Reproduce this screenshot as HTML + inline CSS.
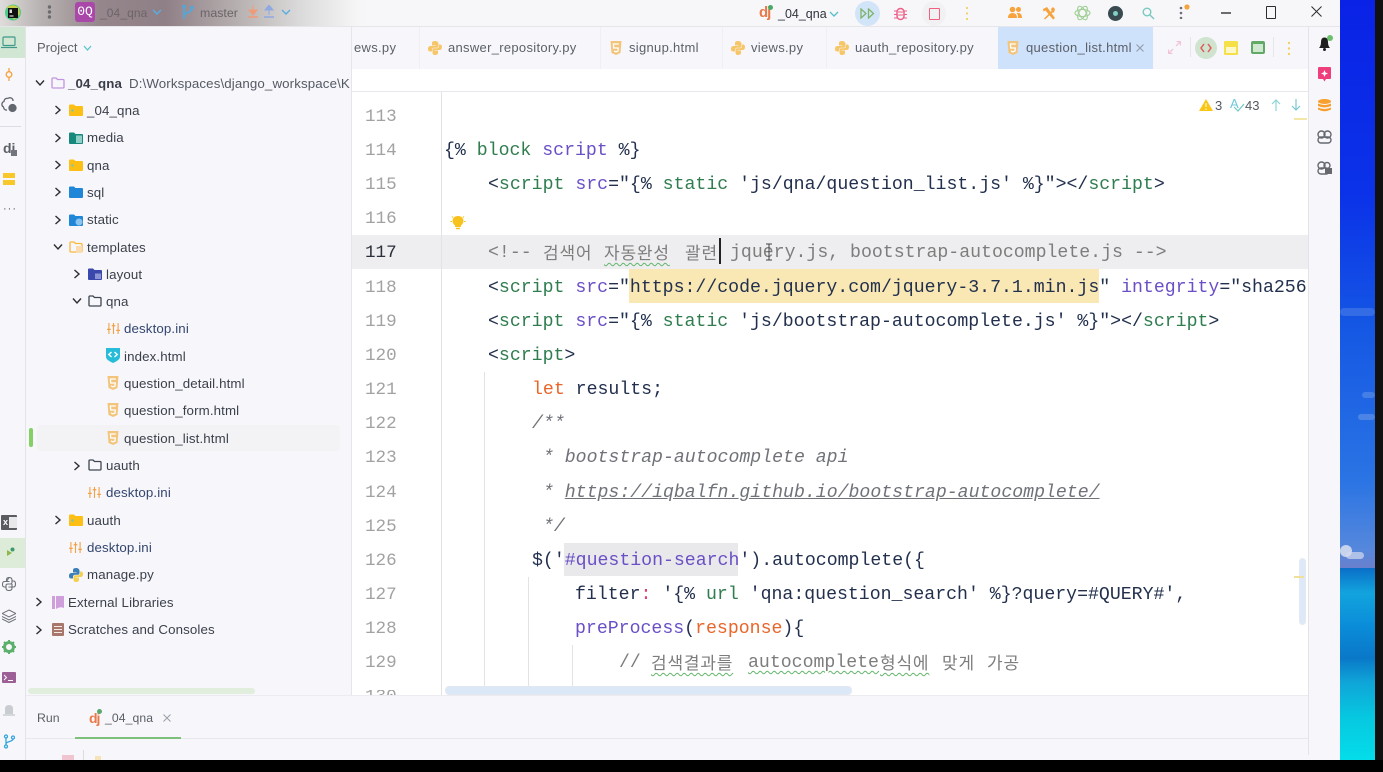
<!DOCTYPE html>
<html><head><meta charset="utf-8"><title>PyCharm</title>
<style>
html,body{margin:0;padding:0;background:#000}
#r{position:relative;width:1383px;height:772px;overflow:hidden;background:#f7f7fb;font-family:"Liberation Sans","Noto Sans CJK KR",sans-serif}
#r div,#r span.a,#r svg.a{position:absolute}
.t{font-size:13.3px;line-height:20px;height:20px;color:#3a3f4a;white-space:nowrap;position:absolute;letter-spacing:.12px;margin-top:1px}
.f{color:#33456f}
.n{position:absolute;left:365px;width:32px;font:17.6px/34px "Liberation Mono",monospace;color:#a2a2a2;height:34px;margin-top:1px}
.c{position:absolute;font:18.2px/34px "Liberation Mono","Noto Sans CJK KR",monospace;color:#22304e;white-space:pre;height:34px;margin-top:1px}
.k{position:absolute;font:17px/34px "Noto Sans CJK KR",sans-serif;letter-spacing:.8px;color:#7d7d7d;white-space:pre;height:34px}
.g{color:#2f7d4f}.p{color:#6a4fc6}.y{color:#7d7d7d}.o{color:#e8662a}.i{font-style:italic;color:#6f7278}
.w{text-decoration:underline wavy #62b56a 1px;text-underline-offset:3px}
.tb{position:absolute;top:39px;font-size:13px;line-height:18px;color:#5b6069;white-space:nowrap;letter-spacing:.3px}
.sep{position:absolute;top:27px;width:1px;height:42px;background:#f0f0f4}
</style></head><body><div id="r">
<svg width="0" height="0" style="position:absolute"><defs>
<symbol id="fy" viewBox="0 0 14 12"><path d="M0 1.500Q0 .5 1 .5H5L6.500 2H13Q14 2 14 3V11Q14 12 13 12H1Q0 12 0 11Z" fill="#fdbf14"/><circle cx="3.500" cy="6.500" r="1.200" fill="#7fc4b0"/></symbol>
<symbol id="h5" viewBox="0 0 12 14"><path d="M.5 0H11.500L10.500 12L6 14L1.500 12Z" fill="#f3c57c"/><path d="M8.800 3H3.400L3.700 7H8.300L8 10L6 10.800L4 10" fill="none" stroke="#fff" stroke-width="1.300"/></symbol>
<symbol id="py" viewBox="0 0 14 14"><path d="M7 0C4 0 4 1.500 4 3V4.500H7.500V5H2.500C1 5 0 6 0 8C0 10 1 10.500 2.500 10.500H4V8.500C4 7.500 5 6.700 6 6.700H9C10 6.700 10.500 6 10.500 5V3C10.500 1 9 0 7 0Z" fill="#f7c668"/><path d="M7 14C10 14 10 12.500 10 11V9.500H6.500V9H11.500C13 9 14 8 14 6C14 4 13 3.500 11.500 3.500H11V5.500C11 6.500 10 7.300 9 7.300H6C5 7.300 4.500 8 4.500 9V11C4.500 13 5 14 7 14Z" fill="#f7c668"/></symbol>
<symbol id="py2" viewBox="0 0 14 14"><path d="M7 0C4 0 4 1.500 4 3V4.500H7.500V5H2.500C1 5 0 6 0 8C0 10 1 10.500 2.500 10.500H4V8.500C4 7.500 5 6.700 6 6.700H9C10 6.700 10.500 6 10.500 5V3C10.500 1 9 0 7 0Z" fill="#3b7fb8"/><path d="M7 14C10 14 10 12.500 10 11V9.500H6.500V9H11.500C13 9 14 8 14 6C14 4 13 3.500 11.500 3.500H11V5.500C11 6.500 10 7.300 9 7.300H6C5 7.300 4.500 8 4.500 9V11C4.500 13 5 14 7 14Z" fill="#f5d04f"/></symbol>
<symbol id="ini" viewBox="0 0 14 12"><path d="M2 0V12M7 0V12M12 0V12" stroke="#f2a044" stroke-width="1.200" fill="none"/><path d="M0 7H4M5 3H9M10 8H14" stroke="#f2a044" stroke-width="1.400" fill="none"/></symbol>
<symbol id="ch" viewBox="0 0 8 10"><path d="M1.500 1L6 5L1.500 9" fill="none" stroke="#2e2e2e" stroke-width="1.400"/></symbol>
<symbol id="cd" viewBox="0 0 10 8"><path d="M1 1.500L5 6L9 1.500" fill="none" stroke="#2e2e2e" stroke-width="1.400"/></symbol>
<symbol id="fo" viewBox="0 0 14 12"><path d="M1 2Q1 1 2 1H5L6.500 2.500H12Q13 2.500 13 3.500V10Q13 11 12 11H2Q1 11 1 10Z" fill="none" stroke="#3f4550" stroke-width="1.300"/></symbol>
</defs></svg>

<!-- title bar -->
<div style="left:0;top:0;width:1340px;height:26px;background:#f7f7fa"></div>
<div style="left:0;top:0;width:370px;height:26px;background:linear-gradient(90deg,#dfdddb 0,#b8b3b2 40px,#95868c 100px,#8f7f86 165px,#b4adad 233px,#dbdada 300px,#f5f5f6 355px,#f7f7fa 370px)"></div>
<div style="left:0;top:26px;width:1340px;height:1px;background:#e6e6ea"></div>
<svg class="a" style="left:5px;top:4px" width="16" height="17" viewBox="0 0 16 17"><circle cx="8" cy="8.500" r="8" fill="#4fc98a"/><path d="M2 3Q8 -1 14 4L15 10L9 16Z" fill="#e9d23c" opacity=".8"/><rect x="3" y="4" width="10" height="10" fill="#111"/><rect x="4.500" y="11.500" width="4" height="1" fill="#fff"/><rect x="4.500" y="5.500" width="2.500" height="3.500" fill="#ddd"/></svg>
<svg class="a" style="left:47px;top:5px" width="5" height="14"><circle cx="2.500" cy="2" r="1.700" fill="#6b6b70"/><circle cx="2.500" cy="7" r="1.700" fill="#6b6b70"/><circle cx="2.500" cy="12" r="1.700" fill="#6b6b70"/></svg>
<div style="left:75px;top:2px;width:20px;height:20px;background:#a948a8;border-radius:3px;color:#fff;font:13px/20px 'Liberation Mono',monospace;text-align:center">0Q</div>
<div style="left:100px;top:3px;font-size:12px;line-height:20px;color:#6d6468;letter-spacing:.1px">_04_qna</div>
<svg class="a" style="left:152px;top:9px" width="10" height="7"><path d="M1 1L5 5L9 1" fill="none" stroke="#58aee0" stroke-width="1.400"/></svg>
<svg class="a" style="left:181px;top:4px" width="14" height="17" viewBox="0 0 14 17"><path d="M3 2V15M3 12C3 8 11 9 11 4" fill="none" stroke="#4fa8dc" stroke-width="1.800"/><circle cx="3" cy="2.500" r="1.800" fill="#4fa8dc"/><circle cx="11" cy="3.500" r="1.800" fill="#4fa8dc"/></svg>
<div style="left:200px;top:3px;font-size:12.4px;line-height:20px;color:#6b6468">master</div>
<svg class="a" style="left:247px;top:5px" width="12" height="13"><path d="M6 0V6M2 5H10L6 10Z" fill="#ef9a78" stroke="#ef9a78"/><path d="M1 12H11" stroke="#ef9a78" stroke-width="1.500"/></svg>
<svg class="a" style="left:263px;top:5px" width="12" height="13"><path d="M6 10V4M2 5H10L6 0Z" fill="#8fa9e2" stroke="#8fa9e2"/><path d="M1 12H11" stroke="#8fa9e2" stroke-width="1.500"/></svg>
<svg class="a" style="left:281px;top:9px" width="10" height="7"><path d="M1 1L5 5L9 1" fill="none" stroke="#58aee0" stroke-width="1.400"/></svg>

<div style="left:759px;top:3px;font:bold 15px/20px 'Liberation Sans',sans-serif;color:#e8794a;letter-spacing:-1px">dj</div>
<div style="left:768px;top:5px;width:5px;height:5px;border-radius:50%;background:#4aa86a"></div>
<div style="left:778px;top:4px;font-size:12.5px;line-height:20px;color:#30343c">_04_qna</div>
<svg class="a" style="left:829px;top:11px" width="10" height="7"><path d="M1 1L5 5L9 1" fill="none" stroke="#5cc0cc" stroke-width="1.400"/></svg>
<div style="left:855px;top:1px;width:25px;height:25px;border-radius:50%;background:#d2e4f8"></div>
<svg class="a" style="left:860px;top:8px" width="15" height="11"><path d="M1 1L6 5.500L1 10ZM8.500 1L13.500 5.500L8.500 10Z" fill="none" stroke="#7cb46c" stroke-width="1.300"/></svg>
<svg class="a" style="left:894px;top:6px" width="13" height="15" viewBox="0 0 13 15"><rect x="3" y="2.500" width="7" height="11" rx="3.500" fill="none" stroke="#ee5f86" stroke-width="1.500"/><path d="M0 5H3M10 5H13M0 8.500H3M10 8.500H13M0 12H3M10 12H13M4 6H9M4 9H9" stroke="#ee5f86" stroke-width="1"/></svg>
<div style="left:922px;top:1px;width:24px;height:25px;border-radius:50%;background:#f1f1f3"></div>
<div style="left:929px;top:8px;width:9px;height:10px;border:1.500px solid #f0607f;border-radius:1px"></div>
<svg class="a" style="left:965px;top:6px" width="4" height="15"><circle cx="2" cy="2" r="1.100" fill="#eed264"/><circle cx="2" cy="7.500" r="1.100" fill="#eed264"/><circle cx="2" cy="13" r="1.100" fill="#eed264"/></svg>
<svg class="a" style="left:1008px;top:6px" width="14" height="13"><circle cx="4.500" cy="3.500" r="2.800" fill="#f7a43c"/><circle cx="10.500" cy="3.500" r="2.500" fill="#f7a43c"/><path d="M0 12Q0 7 4.500 7Q9 7 9 12ZM10 12Q10 8 8.500 7Q14 6 14 12Z" fill="#f7a43c"/></svg>
<svg class="a" style="left:1042px;top:6px" width="14" height="14"><path d="M1 3L5 1L13 12L11 13.500L3.500 4.500L1.500 5.500Z" fill="#f5a33c"/><path d="M13 3L11 1L9 3L9.500 5L2 12.500L3 13.500L10.500 6.500L12 6.500Z" fill="#f5a33c"/></svg>
<svg class="a" style="left:1074px;top:4px" width="17" height="18" fill="none" stroke="#9fcf94" stroke-width="1.100"><ellipse cx="8.500" cy="9" rx="7.500" ry="3.500"/><ellipse cx="8.500" cy="9" rx="7.500" ry="3.500" transform="rotate(60 8.500 9)"/><ellipse cx="8.500" cy="9" rx="7.500" ry="3.500" transform="rotate(120 8.500 9)"/></svg>
<div style="left:1108px;top:6px;width:15px;height:15px;border-radius:50%;background:#394a50"></div>
<div style="left:1113px;top:11px;width:5px;height:5px;border-radius:50%;background:#7ed0c8"></div>
<svg class="a" style="left:1142px;top:7px" width="13" height="13" fill="none" stroke="#78c8c0" stroke-width="1.400"><circle cx="5" cy="5" r="3.800"/><path d="M8 8L12 12"/></svg>
<svg class="a" style="left:1179px;top:4px" width="12" height="15"><circle cx="2" cy="4" r="1.300" fill="#6a6f78"/><circle cx="2" cy="9" r="1.300" fill="#6a6f78"/><circle cx="2" cy="14" r="1.300" fill="#6a6f78"/><circle cx="8" cy="3" r="2.600" fill="#f5a33c"/></svg>
<div style="left:1221px;top:12px;width:10px;height:1.500px;background:#6c6c70"></div>
<div style="left:1266px;top:6px;width:8px;height:11px;border:1.300px solid #2c2c2c;border-radius:1px"></div>
<svg class="a" style="left:1311px;top:6px" width="11" height="11"><path d="M.5.5L10.500 10.500M10.500.5L.5 10.500" stroke="#2c2c2c" stroke-width="1"/></svg>

<!-- wallpaper -->
<div style="left:1340px;top:0;width:35px;height:568px;background:linear-gradient(180deg,#0a22e6 0,#0b33e8 200px,#1558e4 330px,#2a74e4 480px,#5688dc 550px,#6a80cc 568px)"></div>
<div style="left:1340px;top:568px;width:35px;height:192px;background:linear-gradient(180deg,#0a6fc8 0,#12a4de 25px,#0a8bd8 60px,#0a78c8 90px,#0fa6d8 115px,#06c8e0 150px,#04ddea 192px)"></div>
<div style="left:1340px;top:308px;width:35px;height:8px;background:#6f9ae8;opacity:.35;border-radius:4px"></div>
<div style="left:1362px;top:392px;width:13px;height:6px;background:#7ea4ea;opacity:.4;border-radius:3px"></div>
<div style="left:1358px;top:414px;width:17px;height:6px;background:#8cace8;opacity:.4;border-radius:3px"></div>
<div style="left:1340px;top:545px;width:12px;height:12px;background:#e4e6f0;opacity:.8;border-radius:6px"></div>
<div style="left:1346px;top:552px;width:18px;height:7px;background:#d4daf0;opacity:.7;border-radius:4px"></div>
<div style="left:1375px;top:0;width:8px;height:760px;background:#111"></div>
<div style="left:0;top:760px;width:1383px;height:12px;background:#000"></div>

<!-- left bar -->
<div style="left:25px;top:27px;width:1px;height:733px;background:#e4e4e8"></div>
<div style="left:0;top:27px;width:25px;height:31px;background:#d2e6d4"></div>
<svg class="a" style="left:1px;top:36px" width="16" height="13" fill="none" stroke="#3f9a8a" stroke-width="1.200"><rect x="2" y="1" width="12" height="8.500" rx="1"/><path d="M0 11.500H16"/></svg>
<svg class="a" style="left:4px;top:68px" width="10" height="13" fill="none" stroke="#f5a33c" stroke-width="1.300"><circle cx="5" cy="6.500" r="2.800"/><path d="M5 0V3.500M5 9.500V13"/></svg>
<svg class="a" style="left:1px;top:97px" width="16" height="16" fill="none" stroke="#62666e" stroke-width="1.300"><path d="M7 1.500A3 3 0 0 0 3 4.500A3 3 0 0 0 2.500 10A3 3 0 0 0 6 13M7 1.500A3 3 0 0 1 12 4"/><circle cx="11.500" cy="11" r="3.500" fill="#62666e"/></svg>
<div style="left:0;top:126px;width:21px;height:1px;background:#dcdce4"></div>
<div style="left:3px;top:140px;font:bold 14px/16px 'Liberation Sans',sans-serif;color:#5d6068">di</div>
<div style="left:11px;top:150px;width:6px;height:6px;background:#72757c"></div>
<div style="left:3px;top:173px;width:12px;height:5px;background:#f8c82a"></div>
<div style="left:3px;top:180px;width:12px;height:5px;background:#f8c82a"></div>
<div style="left:3px;top:203px;font-size:11px;line-height:12px;color:#555;letter-spacing:1px">···</div>
<div style="left:1px;top:515px;width:16px;height:15px;background:#5a5c60;border-radius:1px"></div>
<div style="left:9px;top:517px;width:8px;height:11px;background:#e8e8ea"></div>
<div style="left:3px;top:516px;font:bold 9px/13px 'Liberation Sans',sans-serif;color:#fff">x</div>
<div style="left:0;top:538px;width:25px;height:30px;background:#dcecd8"></div>
<svg class="a" style="left:6px;top:547px" width="9" height="10"><path d="M1 3L6 6L1 9Z" fill="#8fb84a"/><circle cx="6.500" cy="2.500" r="2" fill="#3f9a6a"/></svg>
<svg class="a" style="left:2px;top:577px" width="14" height="14" viewBox="0 0 14 14" fill="none" stroke="#6c7078" stroke-width="1.100"><path d="M7 .5C4.500 .5 4.500 2 4.500 3V4.500H7.500M4.500 4.500H2.500C1 4.500 .5 6 .5 7.500C.5 9 1 10 2.500 10H4V8.500C4 7.500 5 7 6 7H8.500C9.500 7 10 6 10 5V3C10 1.500 9 .5 7 .5Z"/><path d="M10 4H11.500C13 4 13.500 5.500 13.500 7C13.500 8.500 13 10 11.500 10H6.500M10 7V11C10 12.500 9 13.500 7 13.500C5 13.500 4 12.500 4 11V10"/></svg>
<svg class="a" style="left:2px;top:609px" width="14" height="14" fill="none" stroke="#6c7078" stroke-width="1"><path d="M7 1L14 4.500L7 8L0 4.500ZM0 7.500L7 11L14 7.500M0 10L7 13.500L14 10"/></svg>
<svg class="a" style="left:2px;top:640px" width="14" height="14" viewBox="0 0 14 14"><circle cx="7" cy="7" r="4.500" fill="none" stroke="#5cb06c" stroke-width="3"/><path d="M7 0V3M7 11V14M0 7H3M11 7H14M2 2L4 4M10 10L12 12M12 2L10 4M4 10L2 12" stroke="#5cb06c" stroke-width="2"/></svg>
<div style="left:2px;top:672px;width:14px;height:11px;background:#9c5f96;border-radius:1px"></div>
<svg class="a" style="left:3px;top:674px" width="12" height="8"><path d="M1 1L3.500 3.500L1 6M5 6.500H10" stroke="#fff" fill="none"/></svg>
<svg class="a" style="left:2px;top:702px" width="14" height="15"><path d="M3 12V7Q3 3 7 3Q11 3 11 7V12Z" fill="#c9ccd0"/><path d="M1 13H13" stroke="#c9ccd0" stroke-width="1.500"/></svg>
<svg class="a" style="left:3px;top:734px" width="12" height="15" fill="none" stroke="#35a4dc" stroke-width="1.300"><circle cx="3" cy="2.500" r="1.500"/><circle cx="3" cy="12.500" r="1.500"/><circle cx="10" cy="3.500" r="1.500"/><path d="M3 4V11M3 10C3 7 10 8 10 5"/></svg>

<!-- project header -->
<div style="left:37px;top:38px;font-size:13px;line-height:20px;color:#5e6268">Project</div>
<svg class="a" style="left:83px;top:45px" width="9" height="7"><path d="M1 1L4.500 5L8 1" fill="none" stroke="#5cc4cc" stroke-width="1.300"/></svg>

<!-- project tree -->
<div style="left:37px;top:425px;width:303px;height:26px;background:#f3f3f6;border-radius:3px"></div>
<div style="left:29px;top:428px;width:4px;height:19px;background:#86cf65;border-radius:2px"></div>

<svg class="a" style="left:35px;top:79px" width="10" height="8"><use href="#cd"/></svg>
<svg class="a" style="left:51px;top:77px" width="14" height="12" fill="none" stroke="#c295e0" stroke-width="1.300"><path d="M1 2Q1 1 2 1H5L6.500 2.500H12Q13 2.500 13 3.500V10Q13 11 12 11H2Q1 11 1 10Z"/></svg>
<div class="t" style="left:68px;top:73px;font-weight:bold;color:#3a3d48">_04_qna</div>
<div class="t" style="left:129px;top:73px;width:222px;overflow:hidden;color:#545964">D:\Workspaces\django_workspace\K</div>

<svg class="a" style="left:54px;top:105px" width="8" height="10"><use href="#ch"/></svg>
<svg class="a" style="left:69px;top:104px" width="14" height="12"><use href="#fy"/></svg>
<div class="t" style="left:87px;top:100px">_04_qna</div>

<svg class="a" style="left:54px;top:133px" width="8" height="10"><use href="#ch"/></svg>
<svg class="a" style="left:69px;top:132px" width="14" height="12" viewBox="0 0 14 12"><path d="M0 1.500Q0 .5 1 .5H5L6.500 2H13Q14 2 14 3V11Q14 12 13 12H1Q0 12 0 11Z" fill="#16897c"/><rect x="7" y="3.500" width="6" height="7.500" fill="#8fcfc6"/></svg>
<div class="t" style="left:87px;top:127px">media</div>

<svg class="a" style="left:54px;top:160px" width="8" height="10"><use href="#ch"/></svg>
<svg class="a" style="left:69px;top:159px" width="14" height="12"><use href="#fy"/></svg>
<div class="t" style="left:87px;top:155px">qna</div>

<svg class="a" style="left:54px;top:187px" width="8" height="10"><use href="#ch"/></svg>
<svg class="a" style="left:69px;top:186px" width="14" height="12" viewBox="0 0 14 12"><path d="M0 1.500Q0 .5 1 .5H5L6.500 2H13Q14 2 14 3V11Q14 12 13 12H1Q0 12 0 11Z" fill="#1f86d8"/></svg>
<div class="t" style="left:87px;top:182px">sql</div>

<svg class="a" style="left:54px;top:215px" width="8" height="10"><use href="#ch"/></svg>
<svg class="a" style="left:69px;top:214px" width="14" height="12" viewBox="0 0 14 12"><path d="M0 1.500Q0 .5 1 .5H5L6.500 2H13Q14 2 14 3V11Q14 12 13 12H1Q0 12 0 11Z" fill="#1f86d8"/><circle cx="10" cy="8" r="3.500" fill="#8cc4f0"/></svg>
<div class="t" style="left:87px;top:209px">static</div>

<svg class="a" style="left:53px;top:243px" width="10" height="8"><use href="#cd"/></svg>
<svg class="a" style="left:69px;top:241px" width="14" height="12" viewBox="0 0 14 12" fill="none" stroke="#f7b93a" stroke-width="1.300"><path d="M1 2Q1 1 2 1H5L6.500 2.500H12Q13 2.500 13 3.500V10Q13 11 12 11H2Q1 11 1 10Z"/><rect x="7" y="5" width="6" height="7" fill="#fbdcb0" stroke="none"/></svg>
<div class="t" style="left:87px;top:237px">templates</div>

<svg class="a" style="left:73px;top:269px" width="8" height="10"><use href="#ch"/></svg>
<svg class="a" style="left:88px;top:268px" width="14" height="12" viewBox="0 0 14 12"><path d="M0 1.500Q0 .5 1 .5H5L6.500 2H13Q14 2 14 3V11Q14 12 13 12H1Q0 12 0 11Z" fill="#3a47ac"/><rect x="7" y="5.500" width="6" height="5.500" fill="#8c94d4"/></svg>
<div class="t" style="left:106px;top:264px">layout</div>

<svg class="a" style="left:72px;top:297px" width="10" height="8"><use href="#cd"/></svg>
<svg class="a" style="left:88px;top:295px" width="14" height="12"><use href="#fo"/></svg>
<div class="t" style="left:106px;top:291px">qna</div>

<svg class="a" style="left:107px;top:323px" width="13" height="11"><use href="#ini"/></svg>
<div class="t f" style="left:124px;top:318px">desktop.ini</div>

<svg class="a" style="left:106px;top:348px" width="14" height="15" viewBox="0 0 14 15"><path d="M0 0H14V9Q14 12 7 15Q0 12 0 9Z" fill="#27bcd8"/><path d="M5.500 4L2.800 6.500L5.500 9M8.500 4L11.200 6.500L8.500 9" fill="none" stroke="#fff" stroke-width="1.400"/></svg>
<div class="t" style="left:124px;top:346px">index.html</div>

<svg class="a" style="left:107px;top:376px" width="12" height="14"><use href="#h5"/></svg>
<div class="t" style="left:124px;top:373px">question_detail.html</div>
<svg class="a" style="left:107px;top:403px" width="12" height="14"><use href="#h5"/></svg>
<div class="t" style="left:124px;top:400px">question_form.html</div>
<svg class="a" style="left:107px;top:431px" width="12" height="14"><use href="#h5"/></svg>
<div class="t" style="left:124px;top:428px">question_list.html</div>

<svg class="a" style="left:73px;top:461px" width="8" height="10"><use href="#ch"/></svg>
<svg class="a" style="left:88px;top:459px" width="14" height="12"><use href="#fo"/></svg>
<div class="t" style="left:106px;top:455px">uauth</div>

<svg class="a" style="left:88px;top:487px" width="13" height="11"><use href="#ini"/></svg>
<div class="t f" style="left:106px;top:482px">desktop.ini</div>

<svg class="a" style="left:54px;top:515px" width="8" height="10"><use href="#ch"/></svg>
<svg class="a" style="left:69px;top:514px" width="14" height="12"><use href="#fy"/></svg>
<div class="t" style="left:87px;top:510px">uauth</div>

<svg class="a" style="left:69px;top:542px" width="13" height="11"><use href="#ini"/></svg>
<div class="t f" style="left:87px;top:537px">desktop.ini</div>

<svg class="a" style="left:69px;top:568px" width="14" height="14"><use href="#py2"/></svg>
<div class="t" style="left:87px;top:564px">manage.py</div>

<svg class="a" style="left:35px;top:597px" width="8" height="10"><use href="#ch"/></svg>
<svg class="a" style="left:52px;top:595px" width="12" height="14"><path d="M0 1H3V14H0ZM4 1H12V13Q8 11 4 14Z" fill="#cf9fdc"/></svg>
<div class="t" style="left:68px;top:592px">External Libraries</div>

<svg class="a" style="left:35px;top:625px" width="8" height="10"><use href="#ch"/></svg>
<svg class="a" style="left:52px;top:623px" width="12" height="13"><rect width="12" height="13" rx="1" fill="#a8776c"/><path d="M2 3.500H10M2 6.500H10M2 9.500H10" stroke="#f4e8e4"/></svg>
<div class="t" style="left:68px;top:619px">Scratches and Consoles</div>

<div style="left:28px;top:688px;width:227px;height:6px;background:#e2eedd;border-radius:3px"></div>
<div style="left:351px;top:27px;width:1px;height:669px;background:#e6e6ea"></div>

<!-- tab row -->
<div style="left:352px;top:69px;width:956px;height:22px;background:#fff"></div>
<div style="left:352px;top:91px;width:956px;height:1px;background:#e8e8ec"></div>
<div class="sep" style="left:419px"></div>
<div class="sep" style="left:600px"></div>
<div class="sep" style="left:722px"></div>
<div class="sep" style="left:826px"></div>
<div style="left:998px;top:27px;width:155px;height:42px;background:#cfe2fb"></div>
<div class="tb" style="left:354px">ews.py</div>
<svg class="a" style="left:428px;top:41px" width="14" height="14"><use href="#py"/></svg>
<div class="tb" style="left:448px">answer_repository.py</div>
<svg class="a" style="left:610px;top:41px" width="12" height="14"><use href="#h5"/></svg>
<div class="tb" style="left:629px">signup.html</div>
<svg class="a" style="left:731px;top:41px" width="14" height="14"><use href="#py"/></svg>
<div class="tb" style="left:751px">views.py</div>
<svg class="a" style="left:835px;top:41px" width="14" height="14"><use href="#py"/></svg>
<div class="tb" style="left:855px">uauth_repository.py</div>
<svg class="a" style="left:1007px;top:41px" width="12" height="14"><use href="#h5"/></svg>
<div class="tb" style="left:1026px">question_list.html</div>
<svg class="a" style="left:1136px;top:44px" width="8" height="8"><path d="M.5.5L7.500 7.500M7.500.5L.5 7.500" stroke="#8f98a8"/></svg>
<svg class="a" style="left:1168px;top:41px" width="13" height="13" fill="none" stroke="#f2c4d8" stroke-width="1.300"><path d="M8 5L12.500.5M8.500.5H12.500V4.500M5 8L.5 12.500M.5 8.500V12.500H4.500"/></svg>
<div style="left:1190px;top:37px;width:1px;height:20px;background:#e6e6ea"></div>
<div style="left:1195px;top:37px;width:22px;height:22px;border-radius:50%;background:#cfe3cf"></div>
<svg class="a" style="left:1200px;top:43px" width="12" height="10" fill="none" stroke="#e0544e" stroke-width="1.400"><path d="M4 1L1 5L4 9M8 1L11 5L8 9"/></svg>
<div style="left:1224px;top:41px;width:14px;height:14px;background:#f5e04a;border-radius:1px"></div>
<div style="left:1226px;top:47px;width:10px;height:6px;background:#fdf8c8"></div>
<div style="left:1251px;top:41px;width:10px;height:8px;border:2px solid #62a968;background:#cfe8cf;border-top-width:3px;border-radius:2px"></div>
<div style="left:1273px;top:37px;width:1px;height:20px;background:#e6e6ea"></div>
<svg class="a" style="left:1287px;top:41px" width="4" height="15"><circle cx="2" cy="2" r="1.200" fill="#eed264"/><circle cx="2" cy="7.500" r="1.200" fill="#eed264"/><circle cx="2" cy="13" r="1.200" fill="#eed264"/></svg>

<!-- right sidebar -->
<div style="left:1309px;top:27px;width:31px;height:733px;background:#f7f7fb"></div>
<div style="left:1308px;top:27px;width:1px;height:728px;background:#e4e4e8"></div>
<svg class="a" style="left:1318px;top:36px" width="14" height="15"><path d="M1 12Q3 10 3 6Q3 1.500 6.500 1.500Q10 1.500 10 6Q10 10 12 12Z" fill="#1e1e1e"/><circle cx="6.500" cy="13.500" r="1.500" fill="#1e1e1e"/></svg>
<div style="left:1327px;top:35px;width:6px;height:6px;background:#6cc06c;border-radius:50%"></div>
<svg class="a" style="left:1318px;top:67px" width="13" height="15"><path d="M1 0H12Q13 0 13 1V11Q13 12 12 12H8L6.500 14.500L5 12H1Q0 12 0 11V1Q0 0 1 0Z" fill="#ee3f7c"/><path d="M6.500 3L7.500 5.500L10 6.500L7.500 7.500L6.500 10L5.500 7.500L3 6.500L5.500 5.500Z" fill="#fff"/></svg>
<svg class="a" style="left:1318px;top:99px" width="13" height="13"><ellipse cx="6.500" cy="2.500" rx="6.500" ry="2.500" fill="#f7a030"/><path d="M0 4.500Q6.500 7.500 13 4.500V7Q6.500 10 0 7Z" fill="#f7a030"/><path d="M0 8.500Q6.500 11.500 13 8.500V10.500Q6.500 14 0 10.500Z" fill="#f7a030"/></svg>
<svg class="a" style="left:1317px;top:130px" width="15" height="14" fill="none" stroke="#65686f" stroke-width="1.400"><circle cx="4.500" cy="4.500" r="3.500"/><circle cx="10.500" cy="4.500" r="3.500"/><rect x="1" y="7" width="13" height="6" rx="3"/></svg>
<svg class="a" style="left:1317px;top:161px" width="15" height="14" fill="none" stroke="#65686f" stroke-width="1.400"><circle cx="4.500" cy="4.500" r="3.500"/><circle cx="10" cy="4.500" r="3"/><rect x="1" y="7" width="11" height="6" rx="3"/><rect x="8" y="7" width="7" height="6" fill="#65686f" stroke="none"/></svg>

<!-- editor -->
<div style="left:352px;top:92px;width:956px;height:604px;background:#fff"></div>
<div style="left:352px;top:235px;width:956px;height:34px;background:#eeeef0"></div>
<div style="left:441px;top:92px;width:1px;height:604px;background:#e3e3e6"></div>
<div style="left:629px;top:269px;width:470px;height:34px;background:#f9e8b4"></div>
<div style="left:564px;top:543px;width:174px;height:33px;background:#e9e9eb"></div>
<div style="left:484px;top:372px;width:1px;height:314px;background:#e3e3e6"></div>
<div style="left:528px;top:577px;width:1px;height:109px;background:#e3e3e6"></div>
<div style="left:572px;top:645px;width:1px;height:41px;background:#e3e3e6"></div>

<div class="n" style="top:99px">113</div>
<div class="n" style="top:133px">114</div>
<div class="n" style="top:167px">115</div>
<div class="n" style="top:201px">116</div>
<div class="n" style="top:235px;color:#2b2f3a">117</div>
<div class="n" style="top:270px">118</div>
<div class="n" style="top:304px">119</div>
<div class="n" style="top:338px">120</div>
<div class="n" style="top:372px">121</div>
<div class="n" style="top:406px">122</div>
<div class="n" style="top:440px">123</div>
<div class="n" style="top:475px">124</div>
<div class="n" style="top:509px">125</div>
<div class="n" style="top:543px">126</div>
<div class="n" style="top:577px">127</div>
<div class="n" style="top:611px">128</div>
<div class="n" style="top:645px">129</div>
<div style="left:365px;top:690px;width:32px;height:6px;overflow:hidden;font:17.6px/14px 'Liberation Mono',monospace;color:#a2a2a2">130</div>

<svg class="a" style="left:449px;top:214px" width="18" height="18" fill="none" stroke="#f8c21c"><path d="M9 2.500A4.500 4.500 0 0 0 6.500 11V12.500H11.500V11A4.500 4.500 0 0 0 9 2.500Z" fill="#f8c21c"/><path d="M7 14.500H11" stroke-width="1.500"/><path d="M1.500 7.500H3M15 7.500H16.500M3 2.500L4 3.500M15 2.500L14 3.500" stroke-width="1"/></svg>

<div class="c" style="left:444px;top:133px">{% <span class="g">block</span> <span class="p">script</span> %}</div>
<div class="c" style="left:488px;top:167px">&lt;<span class="g">script</span> <span class="p">src</span>="{% <span class="g">static</span> 'js/qna/question_list.js' %}"&gt;&lt;/<span class="g">script</span>&gt;</div>

<div class="c y" style="left:488px;top:235px">&lt;!--</div>
<div class="k" style="left:543px;top:235px">검색어</div>
<div class="k" style="left:604px;top:235px"><span class="w">자동완성</span></div>
<div class="k" style="left:685px;top:235px">괄련</div>
<div style="left:719px;top:238px;width:1.500px;height:26px;background:#222"></div>
<div class="c y" style="left:730px;top:235px">jquery.js, bootstrap-autocomplete.js --&gt;</div>

<div class="c" style="left:488px;top:270px">&lt;<span class="g">script</span> <span class="p">src</span>="https://code.jquery.com/jquery-3.7.1.min.js" <span class="p">integrity</span>="sha256</div>
<div class="c" style="left:488px;top:304px">&lt;<span class="g">script</span> <span class="p">src</span>="{% <span class="g">static</span> 'js/bootstrap-autocomplete.js' %}"&gt;&lt;/<span class="g">script</span>&gt;</div>
<div class="c" style="left:488px;top:338px">&lt;<span class="g">script</span>&gt;</div>
<div class="c" style="left:532px;top:372px"><span class="o">let</span> results;</div>
<div class="c y" style="left:532px;top:406px"><span class="i">/**</span></div>
<div class="c i" style="left:532px;top:440px"> * bootstrap-autocomplete api</div>
<div class="c i" style="left:532px;top:475px"> * <span style="text-decoration:underline">https://iqbalfn.github.io/bootstrap-autocomplete/</span></div>
<div class="c i" style="left:532px;top:509px"> */</div>
<div class="c" style="left:532px;top:543px">$('<span class="p">#question-search</span>').autocomplete({</div>
<div class="c" style="left:575px;top:577px">filter<span style="color:#e0406a">:</span> '{% <span class="g">url</span> 'qna:question_search' %}?query=#QUERY#',</div>
<div class="c" style="left:575px;top:611px"><span class="p">preProcess</span>(<span class="o">response</span>){</div>
<div class="c y" style="left:619px;top:645px">//</div>
<div class="k" style="left:651px;top:645px"><span class="w">검색결과를</span></div>
<div class="c y" style="left:748px;top:645px"><span class="w">autocomplete</span></div>
<div class="k" style="left:880px;top:645px"><span class="w">형식에</span></div>
<div class="k" style="left:942px;top:645px">맞게</div>
<div class="k" style="left:987px;top:645px">가공</div>

<svg class="a" style="left:764px;top:243px" width="10" height="18" fill="none" stroke="#444"><path d="M2 1H8M5 1V17M2 17H8"/></svg>

<!-- inspection widgets -->
<svg class="a" style="left:1199px;top:99px" width="14" height="12"><path d="M7 0L14 12H0Z" fill="#fbc515"/><path d="M7 4V8M7 9.500V11" stroke="#fff"/></svg>
<div style="left:1215px;top:97px;font-size:13px;line-height:18px;color:#55595f">3</div>
<div style="left:1230px;top:95px;font-size:13px;line-height:18px;color:#70c8dc">A</div>
<svg class="a" style="left:1233px;top:103px" width="12" height="10"><path d="M1 4L5 8L11 1" fill="none" stroke="#70c8c8" stroke-width="1.200"/></svg>
<div style="left:1245px;top:97px;font-size:13px;line-height:18px;color:#55595f">43</div>
<svg class="a" style="left:1271px;top:99px" width="10" height="12" fill="none" stroke="#8fd4d8" stroke-width="1.200"><path d="M5 12V1M1 5L5 1L9 5"/></svg>
<svg class="a" style="left:1291px;top:99px" width="10" height="12" fill="none" stroke="#7cc8d0" stroke-width="1.200"><path d="M5 0V11M1 7L5 11L9 7"/></svg>
<div style="left:1294px;top:118px;width:13px;height:2px;background:#f3e7a8"></div>

<!-- scrollbars -->
<div style="left:1299px;top:558px;width:7px;height:67px;background:#dde8f8;border:1px solid #e6e9f0;border-radius:4px;box-sizing:border-box"></div>
<div style="left:1294px;top:576px;width:10px;height:2px;background:#f0e09a"></div>
<div style="left:445px;top:686px;width:407px;height:9px;background:#dbe8f8;border:1px solid #e3e8f0;border-radius:4px;box-sizing:border-box"></div>

<!-- run panel -->
<div style="left:26px;top:696px;width:1282px;height:64px;background:#f7f7fb"></div>
<div style="left:26px;top:695px;width:1282px;height:1px;background:#ececf0"></div>
<div style="left:26px;top:738px;width:1282px;height:1px;background:#e8e8ec"></div>
<div style="left:75px;top:737px;width:106px;height:2px;background:#7cc07c"></div>
<div style="left:37px;top:708px;font-size:12.3px;line-height:20px;color:#5a5e66">Run</div>
<div style="left:89px;top:708px;font:bold 14px/20px 'Liberation Sans',sans-serif;color:#e8794a;letter-spacing:-1px">dj</div>
<div style="left:97px;top:709px;width:5px;height:5px;background:#5aa870;border-radius:50%"></div>
<div style="left:105px;top:708px;font-size:12.2px;line-height:20px;color:#5a5e66;letter-spacing:.1px">_04_qna</div>
<svg class="a" style="left:163px;top:714px" width="8" height="8"><path d="M.5.5L7.500 7.500M7.500.5L.5 7.500" stroke="#9a9ea6"/></svg>
<div style="left:62px;top:755px;width:12px;height:5px;background:#f0c4d0"></div>
<div style="left:83px;top:750px;width:1px;height:10px;background:#dcdce0"></div>
<div style="left:95px;top:756px;width:6px;height:4px;background:#f7e3b8"></div>
</div></body></html>
